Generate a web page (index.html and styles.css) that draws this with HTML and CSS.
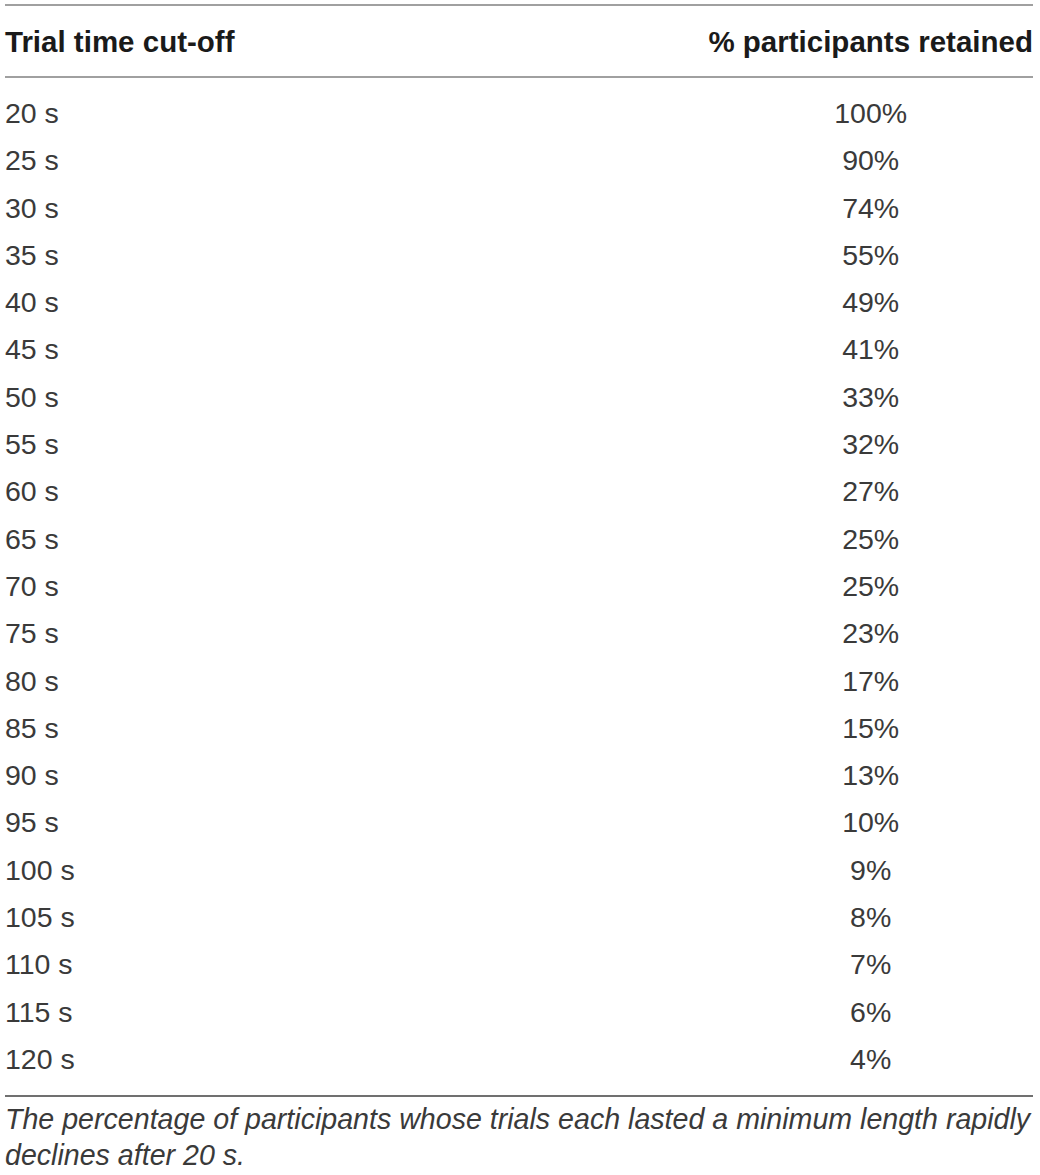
FILE: index.html
```html
<!DOCTYPE html>
<html>
<head>
<meta charset="utf-8">
<link rel="stylesheet" href="styles.css">
</head>
<body>
<div class="wrap">
<table class="data">
<thead>
<tr><th class="c1">Trial time cut-off</th><th class="c2">% participants retained</th></tr>
</thead>
<tbody>
<tr class="first"><td class="c1">20 s</td><td class="c2">100%</td></tr>
<tr><td class="c1">25 s</td><td class="c2">90%</td></tr>
<tr><td class="c1">30 s</td><td class="c2">74%</td></tr>
<tr><td class="c1">35 s</td><td class="c2">55%</td></tr>
<tr><td class="c1">40 s</td><td class="c2">49%</td></tr>
<tr><td class="c1">45 s</td><td class="c2">41%</td></tr>
<tr><td class="c1">50 s</td><td class="c2">33%</td></tr>
<tr><td class="c1">55 s</td><td class="c2">32%</td></tr>
<tr><td class="c1">60 s</td><td class="c2">27%</td></tr>
<tr><td class="c1">65 s</td><td class="c2">25%</td></tr>
<tr><td class="c1">70 s</td><td class="c2">25%</td></tr>
<tr><td class="c1">75 s</td><td class="c2">23%</td></tr>
<tr><td class="c1">80 s</td><td class="c2">17%</td></tr>
<tr><td class="c1">85 s</td><td class="c2">15%</td></tr>
<tr><td class="c1">90 s</td><td class="c2">13%</td></tr>
<tr><td class="c1">95 s</td><td class="c2">10%</td></tr>
<tr><td class="c1">100 s</td><td class="c2">9%</td></tr>
<tr><td class="c1">105 s</td><td class="c2">8%</td></tr>
<tr><td class="c1">110 s</td><td class="c2">7%</td></tr>
<tr><td class="c1">115 s</td><td class="c2">6%</td></tr>
<tr class="last"><td class="c1">120 s</td><td class="c2">4%</td></tr>
</tbody>
</table>
<p class="caption">The percentage of participants whose trials each lasted a minimum length rapidly declines after 20 s.</p>
</div>
</body>
</html>
```
FILE: styles.css
```css
html, body {
  margin: 0;
  padding: 0;
  background: #ffffff;
}
body {
  font-family: "Liberation Sans", Arial, sans-serif;
  color: #231f20;
}
.wrap {
  padding: 4px 7px 0 5px;
}
.data {
  width: 100%;
  border-collapse: collapse;
  font-size: 28.5px;
}
.data th {
  font-weight: bold;
  font-size: 29.5px;
  color: #1a1a1a;
  line-height: 32px;
  padding: 20px 0 18px 0;
  border-top: 2px solid #a0a0a0;
  border-bottom: 2px solid #a0a0a0;
}
.data th.c1 { text-align: left; }
.data th.c2 { text-align: center; width: 1%; white-space: nowrap; }
.data td {
  line-height: 47.3px;
  padding: 0;
  color: #3a3a3a;
}
.data td.c1 { text-align: left; }
.data td.c2 { text-align: center; }
.data tr.first td { padding-top: 12px; }
.data tr.last td { padding-bottom: 12px; border-bottom: 2px solid #707070; }
.caption {
  margin: 4px 0 0 0;
  font-style: italic;
  font-size: 28.6px;
  line-height: 36px;
  color: #3a3a3a;
}
```
